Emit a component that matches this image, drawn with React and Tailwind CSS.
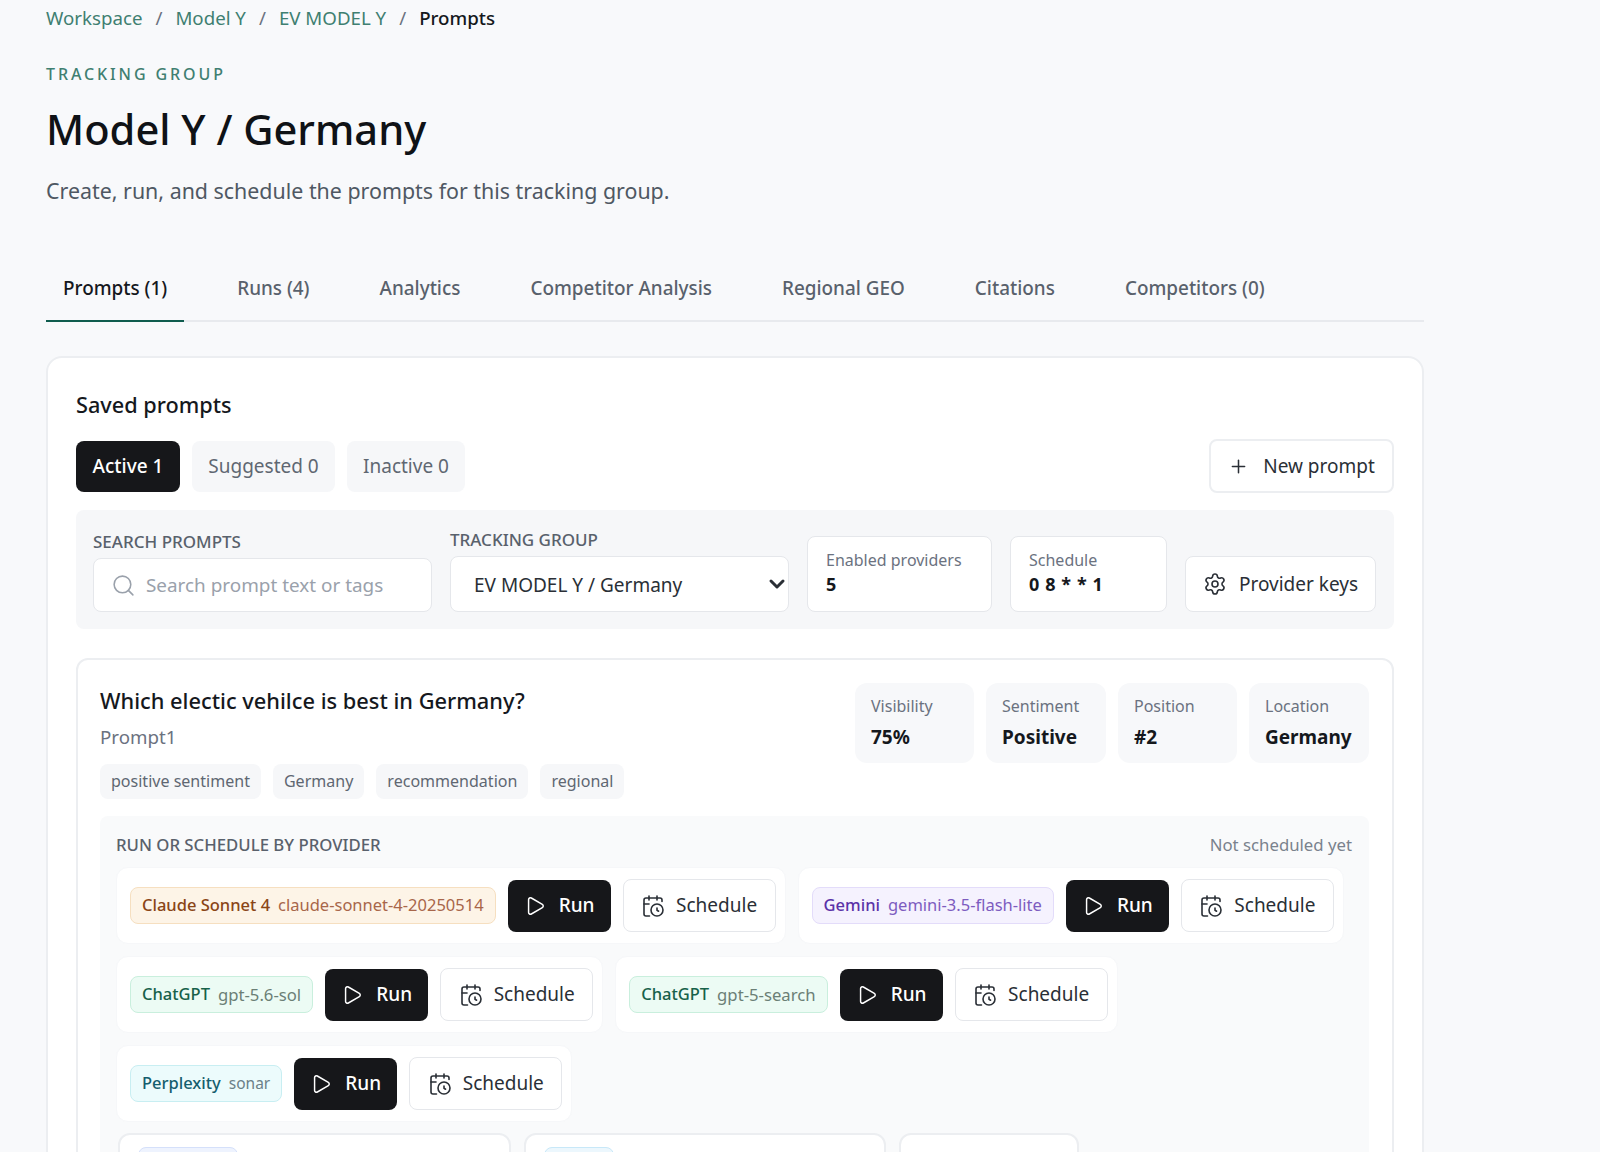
import React from "react";
import { Play, CalendarClock, Plus, Search, Settings, ChevronDown } from "lucide-react";

const tones = {
  claude: "bg-[#fdf4e7] border-[#f6dfc0] text-[#8a4516]",
  gemini: "bg-[#f5f2fe] border-[#e3dcfa] text-[#5b32a8]",
  chatgpt: "bg-[#ecfbf4] border-[#c9efdd] text-[#17614a]",
  perplexity: "bg-[#ecfbfc] border-[#c8eef2] text-[#155e6e]",
};
const modelTones = {
  claude: "text-[#a8664a]",
  gemini: "text-[#7d5cc0]",
  chatgpt: "text-[#6b7f76] text-[16.7px]",
  perplexity: "text-[#6b8088] text-[15.5px]",
};

function Chip({ tone, name, model }) {
  return (
    <div className="flex h-[77px] items-center gap-3 rounded-xl border border-[#f6f7f9] bg-white pl-[13px] pr-[9px]">
      <span className={`flex h-[37px] items-center gap-2 rounded-lg border px-[11px] text-[16.5px] ${tones[tone]}`}>
        <span className="font-medium">{name}</span>
        <span className={modelTones[tone]}>{model}</span>
      </span>
      <button className="flex h-[52px] w-[103px] items-center justify-center gap-[13px] rounded-lg bg-[#16171a] text-[19px] font-medium text-white">
        <Play size={22} strokeWidth={1.6} />
        Run
      </button>
      <button className="flex h-[53px] w-[153px] items-center justify-center gap-[11px] rounded-lg border border-[#e5e7eb] bg-white text-[19px] text-[#2a2f36]">
        <CalendarClock size={24} strokeWidth={1.6} />
        Schedule
      </button>
    </div>
  );
}

function Metric({ label, value, w }) {
  return (
    <div className={`flex h-[80px] flex-col justify-center gap-[9px] rounded-xl bg-[#f7f8fa] pb-[2px] pl-4 ${w}`}>
      <span className="text-[16px] leading-5 text-[#6b7280]">{label}</span>
      <span className="text-[19px] font-bold leading-6 text-[#15181d]">{value}</span>
    </div>
  );
}

function Tag({ children }) {
  return <span className="flex h-[35px] items-center rounded-lg bg-[#f6f7f9] px-[11px] text-[16.05px] text-[#5f6772]">{children}</span>;
}

function Field({ label, value, w }) {
  return (
    <div className={`flex h-[76px] flex-col justify-center rounded-lg border border-[#e5e7eb] bg-white pb-[4px] pl-[18px] ${w}`}>
      <span className="text-[16px] leading-6 text-[#6b7280]">{label}</span>
      <span className="text-[18px] font-bold leading-6 tracking-[0.6px] text-[#15181d]">{value}</span>
    </div>
  );
}

export default function App() {
  return (
    <div className="h-[1152px] overflow-hidden bg-[#f8f9fb] pl-[46px] font-['Noto_Sans','Open_Sans',sans-serif] text-[#15181d]">
      <div className="w-[1378px]">
        <nav className="flex h-[36px] items-center gap-[13px] text-[18.7px] text-[#3f7f71]">
          <span>Workspace</span>
          <span className="text-[#6b7280]">/</span>
          <span>Model Y</span>
          <span className="text-[#6b7280]">/</span>
          <span>EV MODEL Y</span>
          <span className="text-[#6b7280]">/</span>
          <span className="font-medium text-[#15181d]">Prompts</span>
        </nav>
        <p className="mt-[26px] text-[16px] font-medium leading-6 tracking-[2.9px] text-[#3f7f71]">TRACKING GROUP</p>
        <h1 className="mt-[15px] text-[41.6px] font-medium leading-[56px] text-[#0f1216]">Model Y / Germany</h1>
        <p className="mt-[20px] text-[21.4px] leading-7 text-[#4f5863]">Create, run, and schedule the prompts for this tracking group.</p>

        <div className="mt-[64px] flex gap-[36px] border-b-2 border-[#e8eaee] text-[18.9px] font-medium text-[#59616c]">
          {["Prompts (1)", "Runs (4)", "Analytics", "Competitor Analysis", "Regional GEO", "Citations", "Competitors (0)"].map((t, i) => (
            <div key={t} className={`-mb-[2px] flex h-[53px] items-start px-[17px] pt-[5px] ${i === 0 ? "border-b-2 border-[#0f5c4e] text-[#15181d]" : ""}`}>{t}</div>
          ))}
        </div>

        <div className="mt-[34px] h-[900px] rounded-2xl border-2 border-[#eceef1] bg-white pl-[28px] pr-[28px]">
          <h2 className="mt-[31px] text-[21.7px] font-medium leading-8 text-[#15181d]">Saved prompts</h2>
          <div className="mt-[18px] flex items-center justify-between">
            <div className="flex gap-3 text-[19px]">
              <span className="flex h-[51px] w-[104px] items-center justify-center rounded-lg bg-[#16171a] font-medium text-white">Active 1</span>
              <span className="flex h-[51px] w-[143px] items-center justify-center rounded-lg bg-[#f6f7f9] text-[#5f6772]">Suggested 0</span>
              <span className="flex h-[51px] w-[118px] items-center justify-center rounded-lg bg-[#f6f7f9] text-[#5f6772]">Inactive 0</span>
            </div>
            <button className="flex h-[54px] w-[185px] items-center justify-center gap-[14px] rounded-lg border-2 border-[#eceef1] bg-white text-[19px] text-[#2a2f36]">
              <Plus size={21} strokeWidth={1.75} />
              New prompt
            </button>
          </div>

          <div className="mt-[17px] flex h-[119px] items-end gap-[18px] rounded-lg bg-[#f6f7f9] px-[17px] pb-[17px]">
            <label className="block w-[339px]">
              <span className="mb-[4px] block text-[17px] font-medium leading-6 text-[#59616c]">SEARCH PROMPTS</span>
              <span className="flex h-[54px] items-center gap-[10px] rounded-lg border border-[#e5e7eb] bg-white pl-[17px] text-[18.9px] text-[#9aa1ab]">
                <Search size={25} strokeWidth={1.5} />
                Search prompt text or tags
              </span>
            </label>
            <label className="block w-[339px]">
              <span className="mb-[4px] block text-[17px] font-medium leading-6 text-[#59616c]">TRACKING GROUP</span>
              <span className="relative block">
                <select className="block h-[56px] w-full appearance-none rounded-lg border border-[#e5e7eb] bg-white pl-[23px] pr-1 pt-[2px] text-[19px] text-[#2a2f36]">
                  <option>EV MODEL Y / Germany</option>
                </select>
                <ChevronDown size={24} strokeWidth={3} className="pointer-events-none absolute right-0 top-4 text-[#2a2f36]" />
              </span>
            </label>
            <Field label="Enabled providers" value="5" w="w-[185px]" />
            <Field label="Schedule" value="0 8 * * 1" w="w-[157px]" />
            <button className="flex h-[56px] w-[191px] items-center justify-center gap-[12px] rounded-lg border border-[#e5e7eb] bg-white text-[19px] text-[#2a2f36]">
              <Settings size={24} strokeWidth={1.6} />
              Provider keys
            </button>
          </div>

          <div className="mt-[29px] h-[700px] rounded-xl border-2 border-[#eceef1] bg-white pl-[22px] pr-[23px] pt-[22px]">
            <div className="flex justify-between">
              <div>
                <h3 className="mt-[3px] text-[21.8px] font-medium leading-8 text-[#15181d]">Which electic vehilce is best in Germany?</h3>
                <p className="mt-[8px] text-[18.7px] leading-6 text-[#6b7280]">Prompt1</p>
                <div className="mt-[15px] flex gap-3">
                  <Tag>positive sentiment</Tag>
                  <Tag>Germany</Tag>
                  <Tag>recommendation</Tag>
                  <Tag>regional</Tag>
                </div>
              </div>
              <div className="mt-px flex gap-3">
                <Metric label="Visibility" value="75%" w="w-[119px]" />
                <Metric label="Sentiment" value="Positive" w="w-[120px]" />
                <Metric label="Position" value="#2" w="w-[119px]" />
                <Metric label="Location" value="Germany" w="w-[120px]" />
              </div>
            </div>

            <div className="mt-[17px] h-[500px] rounded-lg bg-[#f9fafb] px-4 pt-[17px]">
              <div className="flex items-center justify-between pr-px text-[16.75px] leading-6">
                <span className="font-medium text-[#59616c]">RUN OR SCHEDULE BY PROVIDER</span>
                <span className="text-[#7a828d]">Not scheduled yet</span>
              </div>
              <div className="mt-[10px] flex flex-wrap gap-3">
                <Chip tone="claude" name="Claude Sonnet 4" model="claude-sonnet-4-20250514" />
                <Chip tone="gemini" name="Gemini" model="gemini-3.5-flash-lite" />
                <Chip tone="chatgpt" name="ChatGPT" model="gpt-5.6-sol" />
                <Chip tone="chatgpt" name="ChatGPT" model="gpt-5-search" />
                <Chip tone="perplexity" name="Perplexity" model="sonar" />
              </div>
              <div className="ml-[2px] mt-[11px] flex gap-[13px]">
                <div className="h-[77px] w-[393px] rounded-xl border-2 border-[#eceef1] bg-white pl-[18px] pt-[12px]">
                  <div className="h-[37px] w-[100px] rounded-lg border border-[#d5e0fa] bg-[#eef3fe]"></div>
                </div>
                <div className="h-[77px] w-[362px] rounded-xl border-2 border-[#eceef1] bg-white pl-[18px] pt-[12px]">
                  <div className="h-[37px] w-[70px] rounded-lg border border-[#c8e8f8] bg-[#ecf7fd]"></div>
                </div>
                <div className="h-[77px] w-[180px] rounded-xl border-2 border-[#eceef1] bg-white"></div>
              </div>
            </div>
          </div>
        </div>
      </div>
    </div>
  );
}
